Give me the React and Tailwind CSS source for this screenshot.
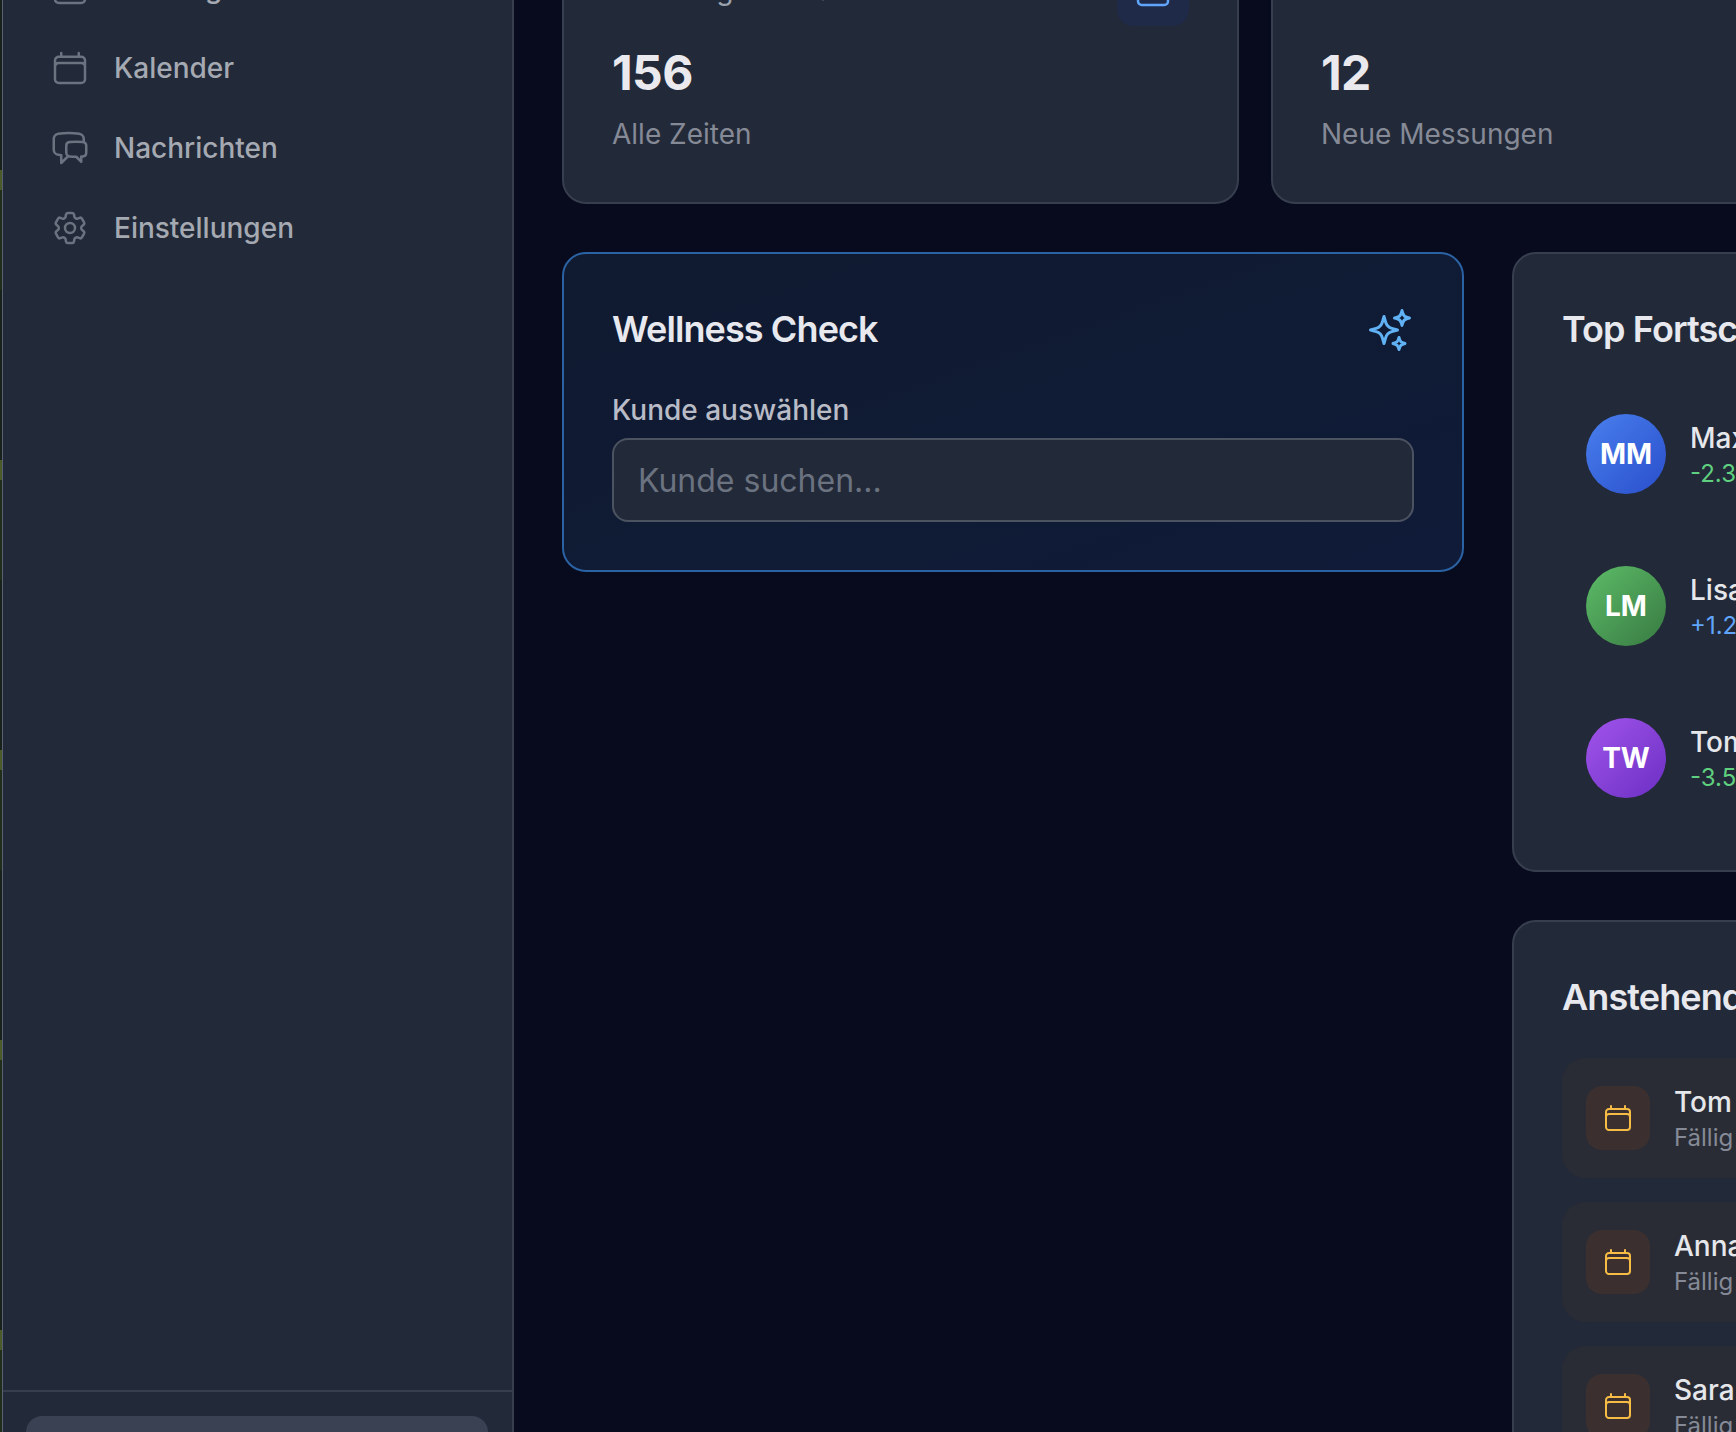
import React from 'react';

const calendar =
  'M6.75 3v2.25M17.25 3v2.25M3 18.75V7.5a2.25 2.25 0 012.25-2.25h13.5A2.25 2.25 0 0121 7.5v11.25m-18 0A2.25 2.25 0 005.25 21h13.5A2.25 2.25 0 0021 18.75m-18 0v-7.5A2.25 2.25 0 015.25 9h13.5A2.25 2.25 0 0121 11.25v7.5';
const chat =
  'M20.25 8.511c.884.284 1.5 1.128 1.5 2.097v4.286c0 1.136-.847 2.1-1.98 2.193-.34.027-.68.052-1.02.072v3.091l-3-3c-1.354 0-2.694-.055-4.02-.163a2.115 2.115 0 01-.825-.242m9.345-8.334a2.126 2.126 0 00-.476-.095 48.64 48.64 0 00-8.048 0c-1.131.094-1.976 1.057-1.976 2.192v4.286c0 .837.46 1.58 1.155 1.951m9.345-8.334V6.637c0-1.621-1.152-3.026-2.76-3.235A48.455 48.455 0 0011.25 3c-2.115 0-4.198.137-6.24.402-1.608.209-2.76 1.614-2.76 3.235v6.226c0 1.621 1.152 3.026 2.76 3.235.577.075 1.157.14 1.74.194V21l4.155-4.155';
const cog =
  'M9.594 3.94c.09-.542.56-.94 1.11-.94h2.593c.55 0 1.02.398 1.11.94l.213 1.281c.063.374.313.686.645.87.074.04.147.083.22.127.325.196.72.257 1.075.124l1.217-.456a1.125 1.125 0 011.37.49l1.296 2.247a1.125 1.125 0 01-.26 1.431l-1.003.827c-.293.241-.438.613-.43.992a7.723 7.723 0 010 .255c-.008.378.137.75.43.991l1.004.827c.424.35.534.955.26 1.43l-1.298 2.247a1.125 1.125 0 01-1.369.491l-1.217-.456c-.355-.133-.75-.072-1.076.124a6.47 6.47 0 01-.22.128c-.331.183-.581.495-.644.869l-.213 1.281c-.09.543-.56.94-1.11.94h-2.594c-.55 0-1.019-.398-1.11-.94l-.213-1.281c-.062-.374-.312-.686-.644-.87a6.52 6.52 0 01-.22-.127c-.325-.196-.72-.257-1.076-.124l-1.217.456a1.125 1.125 0 01-1.369-.49l-1.297-2.247a1.125 1.125 0 01.26-1.431l1.004-.827c.292-.24.437-.613.43-.991a6.932 6.932 0 010-.255c.007-.38-.138-.751-.43-.992l-1.004-.827a1.125 1.125 0 01-.26-1.43l1.297-2.247a1.125 1.125 0 011.37-.491l1.216.456c.356.133.751.072 1.076-.124.072-.044.146-.086.22-.128.332-.183.582-.495.644-.869l.214-1.28ZM15 12a3 3 0 11-6 0 3 3 0 016 0Z';
const sparkles =
  'M9.813 15.904 9 18.75l-.813-2.846a4.5 4.5 0 0 0-3.09-3.09L2.25 12l2.846-.813a4.5 4.5 0 0 0 3.09-3.09L9 5.25l.813 2.846a4.5 4.5 0 0 0 3.09 3.09L15.75 12l-2.846.813a4.5 4.5 0 0 0-3.09 3.09ZM18.259 8.715 18 9.75l-.259-1.035a3.375 3.375 0 0 0-2.455-2.456L14.25 6l1.036-.259a3.375 3.375 0 0 0 2.455-2.456L18 2.25l.259 1.035a3.375 3.375 0 0 0 2.456 2.456L21.75 6l-1.035.259a3.375 3.375 0 0 0-2.456 2.456ZM16.894 20.567 16.5 21.75l-.394-1.183a2.25 2.25 0 0 0-1.423-1.423L13.5 18.75l1.183-.394a2.25 2.25 0 0 0 1.423-1.423l.394-1.183.394 1.183a2.25 2.25 0 0 0 1.423 1.423l1.183.394-1.183.394a2.25 2.25 0 0 0-1.423 1.423Z';

function Icon({ d, className }) {
  return (
    <svg
      viewBox="0 0 24 24"
      fill="none"
      stroke="currentColor"
      strokeWidth="1.5"
      strokeLinecap="round"
      strokeLinejoin="round"
      className={className}
    >
      <path d={d} />
    </svg>
  );
}

function NavItem({ icon, label }) {
  return (
    <div className="flex h-[80px] items-center gap-[24px] px-[24px]">
      <Icon d={icon} className="h-[40px] w-[40px] shrink-0 text-[#6b7280]" />
      <span className="text-[28px] leading-[40px] font-medium text-[#a5a9b2]">
        {label}
      </span>
    </div>
  );
}

function StatCard({ label, value, note, icon }) {
  return (
    <div className="rounded-[24px] border-2 border-[#373f4f] bg-[#222938] p-[48px]">
      <div className="mb-[16px] flex h-[72px] items-center justify-between">
        <span className="text-[28px] leading-[40px] text-[#9ca3af]">
          {label}
        </span>
        {icon && (
          <div className="rounded-[16px] bg-[#1f2a48] p-[16px]">
            <Icon d={icon} className="h-[40px] w-[40px] text-[#60a5fa]" />
          </div>
        )}
      </div>
      <div className="pb-[2px] text-[48px] leading-[62px] font-bold tracking-[-0.6px] text-[#eaeaee]">
        {value}
      </div>
      <div className="mt-[8px] text-[28px] leading-[40px] text-[#858a96]">
        {note}
      </div>
    </div>
  );
}

function CardTitle({ children }) {
  return (
    <h2 className="pb-[2px] text-[36px] leading-[54px] font-semibold tracking-[-0.9px] whitespace-nowrap text-[#e8e9ee]">
      {children}
    </h2>
  );
}

function Progress({ initials, name, change, gradient, tone }) {
  return (
    <div className="flex items-center gap-[24px] p-[24px]">
      <div
        className={`flex h-[80px] w-[80px] shrink-0 items-center justify-center rounded-full bg-gradient-to-br ${gradient} text-[28px] font-bold text-white`}
      >
        {initials}
      </div>
      <div className="whitespace-nowrap">
        <div className="text-[28px] leading-[40px] font-medium text-[#e5e7eb]">
          {name}
        </div>
        <div className={`text-[24px] leading-[32px] ${tone}`}>{change}</div>
      </div>
    </div>
  );
}

function DueItem({ name, due }) {
  return (
    <div className="flex items-center gap-[24px] rounded-[24px] bg-[#292c35] p-[24px]">
      <div className="shrink-0 rounded-[16px] bg-[#3b302f] p-[16px]">
        <Icon d={calendar} className="h-[32px] w-[32px] text-[#f6bc45]" />
      </div>
      <div className="whitespace-nowrap">
        <div className="text-[28px] leading-[40px] font-medium text-[#e5e7eb]">
          {name}
        </div>
        <div className="text-[24px] leading-[32px] text-[#858a96]">{due}</div>
      </div>
    </div>
  );
}

export default function App() {
  return (
    <div className="flex h-[1432px] w-[1736px] overflow-hidden bg-[#080a1d] font-['Inter',sans-serif]">
      {/* sliver of whatever sits behind the app window */}
      <div className="w-[2px] shrink-0 bg-[repeating-linear-gradient(to_bottom,#18221a_0px,#18221a_170px,#4c5a2a_170px,#4c5a2a_190px,#1f2d1a_190px,#1f2d1a_290px)]" />

      <aside className="flex h-full w-[512px] shrink-0 flex-col border-r-2 border-l border-r-[#373f4f] border-l-[#596070] bg-[#222938]">
        <nav className="-mt-[52px] flex-1 px-[23px]">
          <NavItem icon={calendar} label="Training" />
          <NavItem icon={calendar} label="Kalender" />
          <NavItem icon={chat} label="Nachrichten" />
          <NavItem icon={cog} label="Einstellungen" />
        </nav>
        <div className="h-[42px] shrink-0 overflow-hidden border-t-2 border-[#373f4f] pt-[24px] pr-[24px] pl-[23px]">
          <div className="h-[80px] rounded-[16px] bg-[#3a4152]" />
        </div>
      </aside>

      <main className="min-w-0 flex-1 pl-[48px]">
        <div className="-mt-[96px] w-[1400px]">
          <div className="mb-[48px] grid grid-cols-[677px_677px] gap-[32px]">
            <StatCard
              label="Messungen Total"
              value="156"
              note="Alle Zeiten"
              icon={calendar}
            />
            <StatCard label="Diese Woche" value="12" note="Neue Messungen" />
          </div>

          <div className="grid grid-cols-[902px_1fr] items-start gap-[48px]">
            <div className="rounded-[24px] border-2 border-[#2a62a3] bg-gradient-to-br from-[#101a30] to-[#0f1b38] p-[48px]">
              <div className="mb-[32px] flex items-center justify-between">
                <CardTitle>Wellness Check</CardTitle>
                <Icon d={sparkles} className="h-[48px] w-[48px] text-[#60b2f5]" />
              </div>
              <label className="mb-[8px] block text-[28px] leading-[40px] font-medium text-[#b9bcc6]">
                Kunde auswählen
              </label>
              <input
                placeholder="Kunde suchen..."
                className="block w-full rounded-[16px] border-2 border-[#4b5260] bg-[#222938] px-[24px] pt-[17px] pb-[15px] text-[32px] leading-[48px] text-white placeholder:text-[#6b7280]"
              />
            </div>

            <div className="flex flex-col gap-[48px]">
              <div className="rounded-[24px] border-2 border-[#373f4f] bg-[#222938] p-[48px]">
                <div className="mb-[32px]">
                  <CardTitle>Top Fortschritte</CardTitle>
                </div>
                <div className="flex flex-col gap-[24px]">
                  <Progress
                    initials="MM"
                    name="Max Mustermann"
                    change="-2.3 kg"
                    gradient="from-[#4a7fee] to-[#2a4ecb]"
                    tone="text-[#5fd07f]"
                  />
                  <Progress
                    initials="LM"
                    name="Lisa Müller"
                    change="+1.2 kg"
                    gradient="from-[#5dbd68] to-[#387a42]"
                    tone="text-[#60a5fa]"
                  />
                  <Progress
                    initials="TW"
                    name="Tom Weber"
                    change="-3.5 kg"
                    gradient="from-[#a154ea] to-[#6d2ec4]"
                    tone="text-[#5fd07f]"
                  />
                </div>
              </div>

              <div className="rounded-[24px] border-2 border-[#373f4f] bg-[#222938] p-[48px]">
                <div className="mb-[32px]">
                  <CardTitle>Anstehende Messungen</CardTitle>
                </div>
                <div className="flex flex-col gap-[24px]">
                  <DueItem name="Tom Weber" due="Fällig in 2 Tagen" />
                  <DueItem name="Anna Schmidt" due="Fällig in 3 Tagen" />
                  <DueItem name="Sara Koch" due="Fällig in 5 Tagen" />
                </div>
              </div>
            </div>
          </div>
        </div>
      </main>
    </div>
  );
}
